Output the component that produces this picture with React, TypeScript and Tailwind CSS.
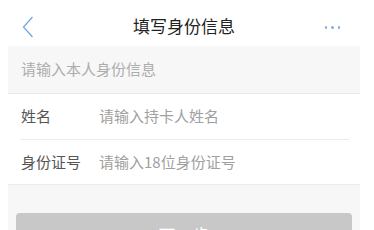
import React from 'react';

const font = { fontFamily: '"Noto Sans CJK SC", "Noto Sans", sans-serif' };

export default function App() {
  return (
    <div className="w-[374px] h-[230px] overflow-hidden bg-white" style={font}>
      <div className="ml-[8px] w-[352px]">
        {/* header */}
        <div className="relative h-[46px] flex items-center justify-center bg-white">
          <svg
            className="absolute left-[14px] top-[16px]"
            width="12"
            height="22"
            viewBox="0 0 12 22"
            fill="none"
          >
            <path d="M10.5 1 L1.5 11 L10.5 21" stroke="#6aa6dc" strokeWidth="1.2" />
          </svg>
          <h1 className="text-[17px] leading-none text-[#222] mt-[5px]">填写身份信息</h1>
          <div className="absolute right-[20px] top-[26px] flex gap-[4px]">
            <span className="w-[2.5px] h-[2.5px] rounded-full bg-[#7fb1dc]" />
            <span className="w-[2.5px] h-[2.5px] rounded-full bg-[#7fb1dc]" />
            <span className="w-[2.5px] h-[2.5px] rounded-full bg-[#7fb1dc]" />
          </div>
        </div>

        {/* section tip */}
        <div className="h-[48px] bg-[#f7f7f7] flex items-center pl-[13px] border-b border-[#e9e9e9]">
          <span className="text-[15px] text-[#adadad]">请输入本人身份信息</span>
        </div>

        {/* form rows */}
        <div className="bg-white border-b border-[#ececec]">
          <div className="ml-[12px] mr-[11px] h-[46px] flex items-center border-b border-[#ececec]">
            <span className="w-[79px] pl-[1px] text-[15px] text-[#555]">姓名</span>
            <span className="text-[15px] text-[#a0a0a0]">请输入持卡人姓名</span>
          </div>
          <div className="ml-[12px] mr-[11px] h-[44px] flex items-center">
            <span className="w-[79px] pl-[1px] text-[15px] text-[#555]">身份证号</span>
            <span className="text-[15px] text-[#a0a0a0]">请输入18位身份证号</span>
          </div>
        </div>

        {/* bottom area */}
        <div className="bg-[#f7f7f7] pt-[28px] px-[8px] h-[60px]">
          <button className="w-full h-[44px] rounded-[4px] bg-[#c8c8c8] text-white text-[17px]">
            下一步
          </button>
        </div>
      </div>
    </div>
  );
}
